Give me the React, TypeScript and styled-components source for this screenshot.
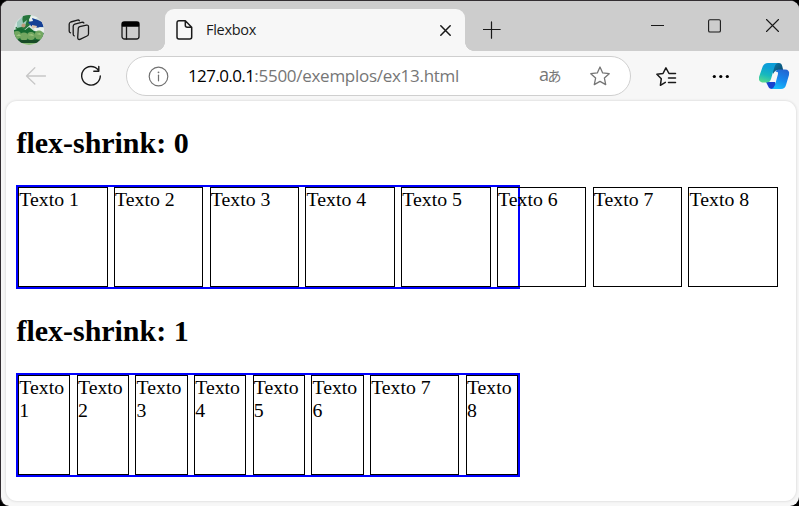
import React from "react";
import styled, { createGlobalStyle } from "styled-components";

const GlobalStyle = createGlobalStyle`
  html, body { margin: 0; padding: 0; background: #000; overflow: hidden; }
  * { box-sizing: border-box; }
`;

const Window = styled.div`
  width: 799px;
  height: 506px;
  display: flex;
  flex-direction: column;
  border-top: 1px solid #332e32;
  border-left: 1px solid #332e32;
  border-radius: 9px;
  background: #f7f7f7;
  overflow: hidden;
`;

const TitleBar = styled.header`
  height: 50px;
  flex: none;
  display: flex;
  background: #cdcdcd;
`;

const Slot = styled.div<{ $left?: number; $top: number }>`
  flex: none;
  margin-left: ${(p) => p.$left ?? 0}px;
  margin-top: ${(p) => p.$top}px;
  svg { display: block; }
`;

const Tab = styled.div`
  position: relative;
  flex: none;
  display: flex;
  width: 300px;
  height: 42px;
  margin: 8px 0 0 25px;
  border-radius: 9px 9px 0 0;
  background: #f7f7f7;
  &::before, &::after {
    content: "";
    position: absolute;
    bottom: 0;
    width: 9px;
    height: 9px;
  }
  &::before {
    left: -9px;
    background: radial-gradient(circle at 0 0, transparent 8.6px, #f7f7f7 9.2px);
  }
  &::after {
    right: -9px;
    background: radial-gradient(circle at 100% 0, transparent 8.6px, #f7f7f7 9.2px);
  }
`;

const TabTitle = styled.span`
  width: 231px;
  margin-left: 13px;
  font: 14.5px/42px "Open Sans", "Noto Sans", sans-serif;
  letter-spacing: -0.3px;
  color: #1b1b1b;
`;

const Toolbar = styled.nav`
  height: 50px;
  flex: none;
  display: flex;
`;

const AddressBar = styled.div`
  flex: none;
  display: flex;
  width: 505px;
  height: 40px;
  margin: 5px 0 0 24px;
  border: 1px solid #cfcfcf;
  border-radius: 20px;
  background: #fff;
`;

const Url = styled.span`
  width: 351px;
  margin-left: 19px;
  font: 17px/38px "Open Sans", "Noto Sans", sans-serif;
  letter-spacing: -0.28px;
  color: #767676;
  white-space: nowrap;
  b { font-weight: 400; color: #000; letter-spacing: -0.6px; }
`;

const Translate = styled.span`
  width: 24px;
  font: 18px/35px "Open Sans", "Noto Sans CJK JP", sans-serif;
  letter-spacing: -0.5px;
  white-space: nowrap;
  color: #767676;
  small { font: 14px/1 "Noto Sans CJK JP", sans-serif; margin-left: -1px; }
`;

const Page = styled.main`
  width: 790px;
  height: 400px;
  margin-left: 5px;
  padding: 25px 0 0 10px;
  border-radius: 11px;
  background: #fff;
  box-shadow: 0 0 2px 1px #e3e3e3;
  font: 19.8px/23px "Liberation Serif", "Times New Roman", serif;
  color: #000;
`;

const Heading = styled.h2`
  height: 34px;
  margin: 0 0 25px;
  padding-left: 0.5px;
  font: bold 30px/34px "Liberation Serif", "Times New Roman", serif;
  letter-spacing: -0.03px;
`;

const FlexRow = styled.div`
  display: flex;
  gap: 6.25px;
  width: 504px;
  height: 104px;
  margin-bottom: 25px;
  border: 2px solid #00f;
`;

const Item = styled.div<{ $rigid: boolean }>`
  flex: 0 ${(p) => (p.$rigid ? 0 : 1)} 89.5px;
  min-width: 0;
  height: 100px;
  padding-left: 0.3px;
  border: 1px solid #000;
`;

const Line = styled.svg`
  fill: none;
  stroke: #191919;
  stroke-width: 1.5;
  stroke-linecap: round;
  stroke-linejoin: round;
`;

const starPath = "M10 1 12.7 6.9 19.2 7.7 14.4 12.1 15.7 18.6 10 15.4 4.3 18.6 5.6 12.1.8 7.7 7.3 6.9Z";

const Avatar = () => (
  <svg width="30" height="30" viewBox="0 0 30 30">
    <defs><clipPath id="avatar"><circle cx="15" cy="15" r="15" /></clipPath></defs>
    <g clipPath="url(#avatar)">
      <path fill="#d5e3de" d="M0 0h30v30H0z" />
      <path fill="#27753c" d="M9 0h8l-2 5 1 5-8 7-7-4 6-4z" />
      <path fill="#9cc9bb" d="M3 7 8 2l1 6 4-3-2 6-8 2z" />
      <path fill="#e9f1ec" d="m17 1 7 1-6 5-3-2z" />
      <path fill="#143f95" d="m14 7 5-1-1-3 6 2 4 2 2 6-4-1-3 2-6-3z" />
      <circle cx="9.5" cy="10.5" r="2" fill="#bd9b7c" />
      <path fill="#dcc4b0" d="m18 10 5 1-1 3-4-1z" />
      <path fill="#176b31" d="m0 15 6-2 5 2 4-3 5 4 10 2v7H0z" />
      <path fill="#e9f1ed" d="m20 13 10-1v5l-9-1z" />
      <g fill="#73a761"><circle cx="3" cy="20" r="4" /><circle cx="10" cy="21.5" r="4" /><circle cx="17" cy="21" r="4" /><circle cx="25" cy="20" r="4.5" /></g>
      <path fill="#9fc681" d="m2 21 3-2 2 2zm12-1 4-1 2 2zm8-1 4-1 1 2z" />
      <path fill="#174b26" d="M3 25h25v3H3z" />
      <path fill="#8cba79" d="M6 28h18v2H6z" />
    </g>
  </svg>
);

const Copilot = () => (
  <svg width="31" height="28" viewBox="0 0 31 28">
    <defs>
      <linearGradient id="cyan" x1=".5" y1="0" x2=".2" y2="1">
        <stop offset=".2" stopColor="#0c9ed7" /><stop offset=".6" stopColor="#17b9bd" /><stop offset="1" stopColor="#59dc8b" />
      </linearGradient>
      <linearGradient id="blue" x1=".8" y1="0" x2=".4" y2="1">
        <stop stopColor="#2564cf" /><stop offset=".55" stopColor="#1689ed" /><stop offset="1" stopColor="#16bafa" />
      </linearGradient>
      <linearGradient id="fold" x1="0" y1="0" x2="1" y2="1">
        <stop stopColor="#0c7bad" /><stop offset="1" stopColor="#0a4362" />
      </linearGradient>
    </defs>
    <path fill="url(#fold)" d="M13 1h7q2.500 0 3.200 3l1 4h-5.200q-3 0-5 4z" />
    <path fill="#1742cf" d="M7 20h9l3 7h-6q-3 0-4-3z" />
    <path fill="url(#blue)" d="M19.500 7.500h6.500q5 0 4 5.500l-3 10q-1 4-5 4H12q3-1 4-4l3-11q.5-3-2.500-2 .5-2.500 3-2.500z" />
    <path fill="url(#cyan)" d="M9 1h10q-2.500.500-3.500 4l-3.500 12q-1 3.500-4.500 3.500H5q-6 0-5-5.500L3.500 5q1.500-4 5.500-4z" />
  </svg>
);

const labels = [1, 2, 3, 4, 5, 6, 7, 8].map((n) => `Texto ${n}`);

const Demo = ({ shrink }: { shrink: 0 | 1 }) => (
  <section>
    <Heading>flex-shrink: {shrink}</Heading>
    <FlexRow>
      {labels.map((label, i) => (
        <Item key={label} $rigid={shrink === 0 || i === 6}>{label}</Item>
      ))}
    </FlexRow>
  </section>
);

export default function App() {
  return (
    <>
      <GlobalStyle />
      <Window>
        <TitleBar>
          <Slot $left={13} $top={14}><Avatar /></Slot>
          <Slot $left={24} $top={18}>
            <Line width="22" height="22" viewBox="0 0 22 22">
              <path strokeWidth="1.3" d="M10.3 9.2Q10.5 8 11.7 7.6L18.5 6.1Q20.5 5.8 20.5 7.8V15Q20.3 16.6 19 17L12 20.4Q9.7 21 9.7 18.5ZM6.2 16.8Q5 16.5 5.2 14.5V7Q5.4 5.6 6.8 5.1L13.5 3.3Q15.5 3 15.9 4M2.5 13.8Q1 13.4 1.2 11.5V5Q1.4 3.5 2.7 3L9.4 1.1Q10.8.7 11.4 1.8" />
            </Line>
          </Slot>
          <Slot $left={31} $top={19.5}>
            <Line width="19" height="19" viewBox="0 0 19 19">
              <rect x="1" y="1" width="17" height="17" rx="2.5" strokeWidth="1.3" /><path d="M5.5 6v12" strokeWidth="1.3" /><path d="M1.5 1.5h16v3.500h-16z" fill="#000" stroke="#000" />
            </Line>
          </Slot>
          <Tab>
            <Slot $left={11} $top={11}>
              <Line width="17" height="20" viewBox="0 0 17 20">
                <path d="M3 .8H9.3L15.7 7.2V17Q15.7 19 13.7 19H3Q1 19 1 17V3Q1 .8 3 .8ZM9.3.8V5.2Q9.3 7.2 11.3 7.2H15.7" />
              </Line>
            </Slot>
            <TabTitle>Flexbox</TabTitle>
            <Slot $left={3} $top={16}>
              <Line width="11" height="11" viewBox="0 0 11 11"><path d="m.8.8 9.4 9.4m0-9.4L.8 10.2" /></Line>
            </Slot>
          </Tab>
          <Slot $left={18} $top={20}>
            <Line width="18" height="18" viewBox="0 0 18 18"><path d="M8.5.8v16.4M.5 8.500h16.7" strokeWidth="1.2" /></Line>
          </Slot>
          <Slot $left={150} $top={18}>
            <Line width="13" height="13" viewBox="0 0 13 13"><path d="M0 6.5h13" strokeWidth="1" /></Line>
          </Slot>
          <Slot $left={44} $top={18}>
            <Line width="13" height="14" viewBox="0 0 13 14"><rect x=".6" y=".7" width="11.8" height="12.3" rx="1.3" strokeWidth="1.1" /></Line>
          </Slot>
          <Slot $left={45} $top={18}>
            <Line width="13" height="13" viewBox="0 0 13 13"><path d="m.5.5 12 12m0-12-12 12" strokeWidth="1.1" /></Line>
          </Slot>
        </TitleBar>
        <Toolbar>
          <Slot $left={24} $top={16}>
            <Line width="22" height="19" viewBox="0 0 22 19"><path d="M20.5 9H1.5M9.8.8 1.5 9l8.3 8" stroke="#c7c7c7" strokeWidth="1.3" /></Line>
          </Slot>
          <Slot $left={33} $top={14}>
            <Line width="22" height="22" viewBox="0 0 22 22"><path d="M20.3 11A9.3 9.3 0 1 1 18.3 5M18.8 1.5V6.3H13.8" strokeWidth="1.4" /></Line>
          </Slot>
          <AddressBar>
            <Slot $left={21} $top={9}>
              <Line width="21" height="21" viewBox="0 0 21 21"><circle cx="10.5" cy="10.5" r="9.3" stroke="#727272" strokeWidth="1.2" /><path d="M10.5 9.2v5.6" stroke="#727272" strokeWidth="1.2" /><circle cx="10.5" cy="6.3" r=".9" fill="#727272" stroke="none" /></Line>
            </Slot>
            <Url><b>127.0.0.1</b>:5500/exemplos/ex13.html</Url>
            <Translate>a<small>あ</small></Translate>
            <Slot $left={27} $top={9}>
              <Line width="20" height="20" viewBox="0 0 20 20"><path d={starPath} stroke="#767676" strokeWidth="1.3" /></Line>
            </Slot>
          </AddressBar>
          <Slot $left={25} $top={16}>
            <Line width="21" height="20" viewBox="0 0 21 20"><path d="M19.5 6.5H13L9.9.8 7 6.5.9 7.3 5.3 11.7 4.4 18.3 9.3 15.4M12.5 11h7M12.5 15.4h7" /></Line>
          </Slot>
          <Slot $left={35} $top={23}>
            <svg width="18" height="5" viewBox="0 0 18 5"><circle cx="2.3" cy="2.5" r="1.6" /><circle cx="8.8" cy="2.5" r="1.6" /><circle cx="15.3" cy="2.5" r="1.6" /></svg>
          </Slot>
          <Slot $left={29} $top={11}><Copilot /></Slot>
        </Toolbar>
        <Page>
          <Demo shrink={0} />
          <Demo shrink={1} />
        </Page>
      </Window>
    </>
  );
}
